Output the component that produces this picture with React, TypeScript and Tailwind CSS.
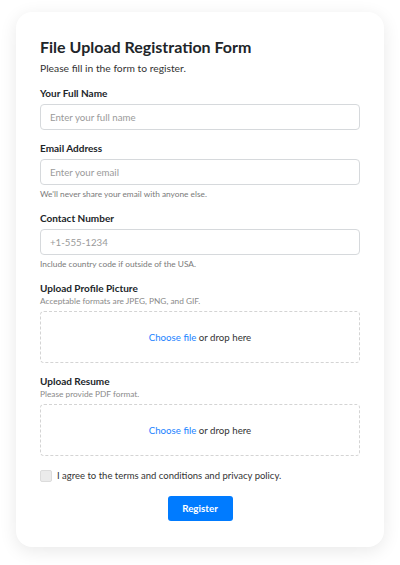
import React, { useState } from 'react';

const Field: React.FC<{ label: string; placeholder: string; type?: string; help?: string }> = ({ label, placeholder, type = 'text', help }) => (
    <div className="flex flex-col">
        <label className="text-[10px] font-bold leading-[14px] text-[#212529]">{label}</label>
        <input
            type={type}
            placeholder={placeholder}
            className="mt-[4px] h-[26px] w-full rounded-[4px] border border-[#d6d9dc] px-[9px] text-[9.7px] text-[#333] placeholder:text-[#9a9a9a] outline-none"
        />
        {help && <p className="mt-[3px] text-[8.3px] leading-[12px] text-[#7a7a7a]">{help}</p>}
    </div>
);

const DropZone: React.FC<{ label: string; help: string }> = ({ label, help }) => (
    <div className="flex flex-col">
        <label className="text-[10px] font-bold leading-[14px] text-[#212529]">{label}</label>
        <p className="text-[8.3px] leading-[12px] text-[#8a8a8a]">{help}</p>
        <div className="mt-[4px] flex h-[52px] items-center justify-center rounded-[4px] border border-dashed border-[#d4d4d4] text-[9.7px] text-[#333]">
            <span className="text-[#1a82ff]">Choose file</span>
            <span>&nbsp;or drop here</span>
        </div>
    </div>
);

export default function App() {
    const [agree, setAgree] = useState(false);

    return (
        <div className="min-h-[565px] w-[400px] bg-white pt-[12px] px-[16px] pb-[19px]" style={{ fontFamily: 'Lato, "Noto Sans", sans-serif' }}>
            <div className="rounded-[16px] bg-white px-[24px] pt-[24px] pb-[26px] shadow-[0_4px_18px_rgba(0,0,0,0.09)]">
                <h1 className="text-[16px] font-bold leading-[22px] text-[#212529]">File Upload Registration Form</h1>
                <p className="mt-[3px] text-[10.3px] leading-[15px] text-[#333]">Please fill in the form to register.</p>

                {/* Fields */}
                <div className="mt-[10px] flex flex-col gap-[11px]">
                    <Field label="Your Full Name" placeholder="Enter your full name" />
                    <Field label="Email Address" placeholder="Enter your email" type="email" help="We'll never share your email with anyone else." />
                    <Field label="Contact Number" placeholder="+1-555-1234" type="tel" help="Include country code if outside of the USA." />
                    <DropZone label="Upload Profile Picture" help="Acceptable formats are JPEG, PNG, and GIF." />
                    <DropZone label="Upload Resume" help="Please provide PDF format." />
                </div>

                {/* Terms */}
                <label className="mt-[13px] flex items-center gap-[5px] text-[9.5px] text-[#333]">
                    <button
                        type="button"
                        onClick={() => setAgree(!agree)}
                        className={`h-[12px] w-[12px] rounded-[2px] border ${agree ? 'border-[#1a82ff] bg-[#1a82ff]' : 'border-[#dcdcdc] bg-[#ebebeb]'}`}
                    />
                    I agree to the terms and conditions and privacy policy.
                </label>

                <div className="mt-[13px] flex justify-center">
                    <button className="h-[25px] w-[65px] rounded-[3px] bg-[#007bff] text-[9.8px] font-bold text-white">Register</button>
                </div>
            </div>
        </div>
    );
}
